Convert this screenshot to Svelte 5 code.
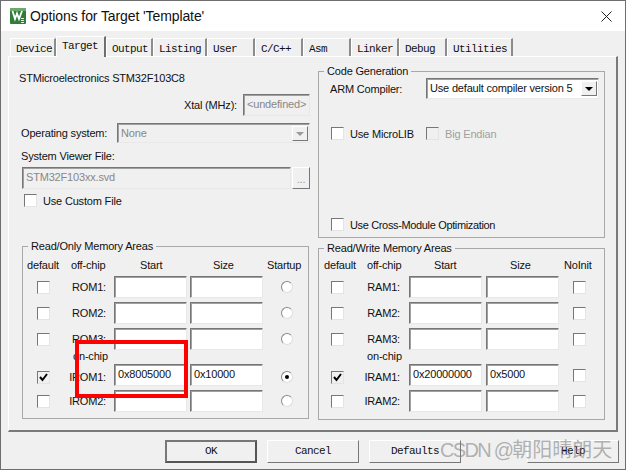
<script>
  const tabs = [
    { name: 'Device', w: 46 },
    { name: 'Target', w: 50, active: true },
    { name: 'Output', w: 47 },
    { name: 'Listing', w: 54 },
    { name: 'User', w: 48 },
    { name: 'C/C++', w: 48 },
    { name: 'Asm', w: 48 },
    { name: 'Linker', w: 48 },
    { name: 'Debug', w: 48 },
    { name: 'Utilities', w: 66 }
  ]
  const romRows = [
    { label: 'ROM1:' },
    { label: 'ROM2:' },
    { label: 'ROM3:' },
    { label: 'IROM1:', chip: true, on: true, start: '0x8005000', size: '0x10000' },
    { label: 'IROM2:' }
  ]
  const ramRows = [
    { label: 'RAM1:' },
    { label: 'RAM2:' },
    { label: 'RAM3:' },
    { label: 'IRAM1:', chip: true, on: true, start: '0x20000000', size: '0x5000' },
    { label: 'IRAM2:' }
  ]
</script>

<div class="dialog">
  <div class="titlebar">
    <svg class="appicon" width="16" height="16" viewBox="0 0 16 16">
      <rect width="16" height="16" rx="1" fill="#2f7d3a" />
      <rect x="0" y="0" width="16" height="3" fill="#6aa86c" />
      <path d="M2.5 3 L5 11 L7 5.5 L9 11 L12 3" fill="none" stroke="#fff" stroke-width="1.8" />
      <path d="M11 10.5 h3 M11 12.5 h3 M11 14.5 h3" stroke="#e8f0e8" stroke-width="1" />
    </svg>
    <span class="title">Options for Target 'Template'</span>
    <svg class="close" width="11" height="11" viewBox="0 0 11 11">
      <path d="M0.5 0.5 L10.5 10.5 M10.5 0.5 L0.5 10.5" stroke="#222" stroke-width="1" fill="none" />
    </svg>
  </div>

  <div class="body">
    <div class="tabs">
      {#each tabs as tab}
        <div class="tab" class:active={tab.active} style="width: {tab.w}px">{tab.name}</div>
      {/each}
    </div>

    <div class="panel">
      <div class="col left">
        <div class="device">STMicroelectronics STM32F103C8</div>
        <div class="xtal">
          <span>Xtal (MHz):</span>
          <div class="field disabled xtal-input">&lt;undefined&gt;</div>
        </div>
        <div class="os">
          <span class="os-label">Operating system:</span>
          <div class="field disabled os-select">
            <span>None</span>
            <span class="arrow off"><i></i></span>
          </div>
        </div>
        <div class="svf-label">System Viewer File:</div>
        <div class="svf">
          <div class="field disabled svf-input">STM32F103xx.svd</div>
          <div class="dots">...</div>
        </div>
        <label class="check custom"><span class="box"></span>Use Custom File</label>

        <fieldset class="group rom">
          <legend>Read/Only Memory Areas</legend>
          <div class="mem-head">
            <span class="h-default">default</span>
            <span class="h-chip">off-chip</span>
            <span class="h-start">Start</span>
            <span class="h-size">Size</span>
            <span class="h-last">Startup</span>
          </div>
          {#each romRows as row}
            {#if row.chip}<div class="onchip">on-chip</div>{/if}
            <div class="mem-row" class:chip={row.chip}>
              <span class="box" class:checked={row.on}>
                {#if row.on}<svg width="11" height="11" viewBox="0 0 11 11"><path d="M2 5 L4.5 8 L9 2" fill="none" stroke="#000" stroke-width="2" /></svg>{/if}
              </span>
              <span class="mem-label">{row.label}</span>
              <div class="field mem-input">{row.start ?? ''}</div>
              <div class="field mem-input">{row.size ?? ''}</div>
              <span class="radio" class:checked={row.on}></span>
            </div>
          {/each}
        </fieldset>
      </div>

      <div class="col right">
        <fieldset class="group code">
          <legend>Code Generation</legend>
          <div class="compiler">
            <span>ARM Compiler:</span>
            <div class="field select">
              <span>Use default compiler version 5</span>
              <span class="arrow"><i></i></span>
            </div>
          </div>
          <div class="micro">
            <label class="check"><span class="box"></span>Use MicroLIB</label>
            <label class="check off"><span class="box"></span>Big Endian</label>
          </div>
          <label class="check cross"><span class="box"></span>Use Cross-Module Optimization</label>
        </fieldset>

        <fieldset class="group ram">
          <legend>Read/Write Memory Areas</legend>
          <div class="mem-head">
            <span class="h-default">default</span>
            <span class="h-chip">off-chip</span>
            <span class="h-start">Start</span>
            <span class="h-size">Size</span>
            <span class="h-last">NoInit</span>
          </div>
          {#each ramRows as row}
            {#if row.chip}<div class="onchip">on-chip</div>{/if}
            <div class="mem-row" class:chip={row.chip}>
              <span class="box" class:checked={row.on}>
                {#if row.on}<svg width="11" height="11" viewBox="0 0 11 11"><path d="M2 5 L4.5 8 L9 2" fill="none" stroke="#000" stroke-width="2" /></svg>{/if}
              </span>
              <span class="mem-label">{row.label}</span>
              <div class="field mem-input">{row.start ?? ''}</div>
              <div class="field mem-input">{row.size ?? ''}</div>
              <span class="box last"></span>
            </div>
          {/each}
        </fieldset>
      </div>
    </div>

    <div class="buttons">
      <div class="btn default">OK</div>
      <div class="btn">Cancel</div>
      <div class="btn">Defaults</div>
      <div class="btn help">Help</div>
    </div>
  </div>

  <!-- annotation drawn on top of the screenshot -->
  <div class="redbox"></div>
  <div class="watermark"><span class="wm-latin">CSDN @</span>朝阳晴朗天</div>
</div>

<style>
  :global(body) {
    margin: 0;
    background: #f0f0f0;
  }
  .dialog {
    position: relative;
    width: 626px;
    height: 470px;
    box-sizing: border-box;
    border: 1px solid #6e6e6e;
    background: #f0f0f0;
    font-family: "Liberation Sans", Arial, sans-serif;
    font-size: 11px;
    letter-spacing: -0.18px;
    color: #111;
    overflow: hidden;
  }
  .titlebar {
    height: 30px;
    background: #fff;
    display: flex;
    align-items: center;
    padding: 0 13px 0 9px;
  }
  .appicon {
    flex: none;
  }
  .title {
    margin-left: 4px;
    font-size: 14px;
    letter-spacing: -0.1px;
    flex: 1;
  }
  .close {
    flex: none;
  }
  .tabs {
    display: flex;
    height: 25px;
    padding: 0 0 0 9px;
    align-items: flex-end;
  }
  .tab {
    box-sizing: border-box;
    height: 18px;
    padding: 3px 0 0 5px;
    border-top: 1px solid #fff;
    border-left: 1px solid #fff;
    border-right: 2px solid #8c8c8c;
    font-family: "Liberation Mono", monospace;
    font-size: 11px;
    letter-spacing: -0.6px;
    line-height: 15px;
  }
  .tab.active {
    height: 21px;
    position: relative;
    top: 1px;
    padding-top: 2px;
    background: #f0f0f0;
    z-index: 1;
    border-right: 2px solid #6e6e6e;
  }
  .panel {
    box-sizing: border-box;
    width: 610px;
    height: 376px;
    margin-left: 7px;
    border-top: 1px solid #fff;
    border-left: 1px solid #fff;
    border-right: 2px solid #7a7a7a;
    border-bottom: 2px solid #7a7a7a;
    display: flex;
    padding-left: 10px;
  }
  .col {
    display: flex;
    flex-direction: column;
  }
  .left {
    width: 291px;
  }
  .device {
    margin-top: 14px;
    height: 14px;
    line-height: 14px;
  }
  .xtal {
    display: flex;
    justify-content: flex-end;
    align-items: center;
    gap: 6px;
    margin-top: 9px;
  }
  .field {
    box-sizing: border-box;
    background: #fff;
    border-top: 1px solid #767676;
    border-left: 1px solid #767676;
    border-right: 1px solid #e8e8e8;
    border-bottom: 1px solid #e8e8e8;
    box-shadow: inset 1px 1px 0 #a0a0a0;
    padding: 2px 0 0 3px;
    line-height: 14px;
    color: #111;
  }
  .field.disabled {
    background: #f0f0f0;
    color: #888;
  }
  .xtal-input {
    width: 67px;
    height: 22px;
    white-space: nowrap;
  }
  .os {
    display: flex;
    align-items: center;
    margin-top: 7px;
  }
  .os-label {
    margin-left: 2px;
    width: 96px;
  }
  .os-select {
    width: 193px;
    height: 20px;
    display: flex;
    justify-content: space-between;
  }
  .arrow {
    width: 16px;
    height: 15px;
    margin-right: 1px;
    background: #f0f0f0;
    border-top: 1px solid #fff;
    border-left: 1px solid #fff;
    border-right: 1px solid #777;
    border-bottom: 1px solid #777;
    display: flex;
    align-items: center;
    justify-content: center;
    box-sizing: border-box;
  }
  .arrow i {
    width: 0;
    height: 0;
    border-left: 4px solid transparent;
    border-right: 4px solid transparent;
    border-top: 4px solid #000;
  }
  .arrow.off i {
    border-top-color: #999;
  }
  .svf-label {
    margin: 6px 0 0 2px;
    height: 14px;
    line-height: 14px;
  }
  .svf {
    display: flex;
    margin: 4px 0 0 3px;
  }
  .svf-input {
    width: 269px;
    height: 22px;
  }
  .dots {
    box-sizing: border-box;
    width: 18px;
    height: 22px;
    margin-left: 1px;
    border-top: 1px solid #fff;
    border-left: 1px solid #fff;
    border-right: 1px solid #777;
    border-bottom: 1px solid #777;
    text-align: center;
    line-height: 22px;
    color: #999;
  }
  .box {
    box-sizing: border-box;
    display: inline-flex;
    align-items: center;
    justify-content: center;
    flex: none;
    width: 13px;
    height: 13px;
    background: #fff;
    border-top: 1px solid #777;
    border-left: 1px solid #777;
    border-right: 1px solid #e4e4e4;
    border-bottom: 1px solid #e4e4e4;
  }
  .box.checked {
    background: #f0f0f0;
  }
  .check {
    display: flex;
    align-items: center;
    gap: 6px;
    height: 13px;
    white-space: nowrap;
  }
  .check.off {
    color: #a0a0a0;
  }
  .check.off .box {
    background: #f0f0f0;
  }
  .custom {
    margin: 5px 0 0 5px;
  }
  .group {
    margin: 0;
    padding: 0;
    box-sizing: border-box;
    width: 287px;
    border: 1px solid #a8a8a8;
    min-width: 0;
  }
  .group legend {
    margin-left: 5px;
    padding: 0 3px;
    line-height: 14px;
    height: 14px;
  }
  .rom {
    margin: 32px 0 0 3px;
    height: 180px;
  }
  .mem-head {
    position: relative;
    height: 14px;
    margin-top: 5px;
  }
  .ram .mem-head {
    margin-top: 3px;
  }
  .mem-head span {
    position: absolute;
    top: 0;
    line-height: 14px;
  }
  .rom .h-default { left: 4px; }
  .rom .h-chip { left: 48px; }
  .rom .h-start { left: 117px; }
  .rom .h-size { left: 190px; }
  .rom .h-last { left: 244px; }
  .ram .h-default { left: 5px; }
  .ram .h-chip { left: 48px; }
  .ram .h-start { left: 115px; }
  .ram .h-size { left: 191px; }
  .ram .h-last { left: 245px; }
  .mem-row {
    display: flex;
    align-items: center;
    height: 22px;
    margin-top: 4px;
    padding-left: 14px;
  }
  .mem-label {
    width: 56px;
    text-align: right;
    margin-right: 8px;
  }
  /* the on-chip row's checks and label sit a little lower than its inputs */
  .mem-row.chip .mem-label,
  .mem-row.chip .radio,
  .mem-row.chip .box:not(.last) {
    margin-top: 4px;
  }
  .mem-input {
    height: 22px;
    width: 73px;
    margin-right: 3px;
  }
  .radio {
    box-sizing: border-box;
    width: 12px;
    height: 12px;
    margin-left: 15px;
    border-radius: 50%;
    background: #fff;
    border: 1px solid #888;
    border-right-color: #ddd;
    border-bottom-color: #ddd;
    display: flex;
    align-items: center;
    justify-content: center;
  }
  .radio.checked::after {
    content: "";
    width: 4px;
    height: 4px;
    border-radius: 50%;
    background: #000;
  }
  .onchip {
    height: 10px;
    line-height: 12px;
    margin-left: 50px;
  }
  .ram .onchip {
    margin-left: 48px;
  }
  .right {
    margin-left: 8px;
  }
  .code {
    margin-top: 7px;
    height: 174px;
    display: flex;
    flex-direction: column;
  }
  .compiler {
    display: flex;
    align-items: center;
    padding-left: 11px;
  }
  .compiler > span {
    width: 96px;
  }
  .select {
    width: 173px;
    height: 21px;
    display: flex;
    justify-content: space-between;
    white-space: nowrap;
  }
  .micro {
    display: flex;
    margin: 28px 0 0 12px;
  }
  .micro .check {
    width: 95px;
  }
  .cross {
    margin: 78px 0 0 12px;
    letter-spacing: -0.35px;
  }
  .ram {
    margin-top: 3px;
    height: 179px;
  }
  .ram .mem-label {
    margin-right: 9px;
  }
  .ram .mem-row {
    padding-left: 12px;
  }
  .ram .mem-input {
    margin-right: 4px;
  }
  .box.last {
    margin-left: 10px;
  }
  .buttons {
    display: flex;
    gap: 10px;
    padding: 8px 0 0 164px;
  }
  .btn {
    box-sizing: border-box;
    width: 92px;
    height: 23px;
    border-top: 1px solid #fff;
    border-left: 1px solid #fff;
    border-right: 1px solid #777;
    border-bottom: 1px solid #777;
    text-align: center;
    font-family: "Liberation Mono", monospace;
    font-size: 11px;
    letter-spacing: -0.6px;
    line-height: 21px;
  }
  .btn.default {
    border: 2px solid #555;
    border-top-color: #777;
    border-left-color: #777;
    line-height: 19px;
  }
  .help {
    margin-left: 56px;
  }
  .redbox {
    position: absolute;
    left: 74px;
    top: 339px;
    width: 105px;
    height: 50px;
    border: 4px solid #f00;
  }
  .watermark {
    position: absolute;
    left: 439px;
    top: 437px;
    font-family: "Liberation Sans", "Noto Sans CJK SC", sans-serif;
    font-size: 20px;
    letter-spacing: 0;
    line-height: 24px;
    color: rgba(120, 120, 120, 0.55);
    white-space: nowrap;
  }
  .wm-latin {
    letter-spacing: -1.7px;
  }
</style>
